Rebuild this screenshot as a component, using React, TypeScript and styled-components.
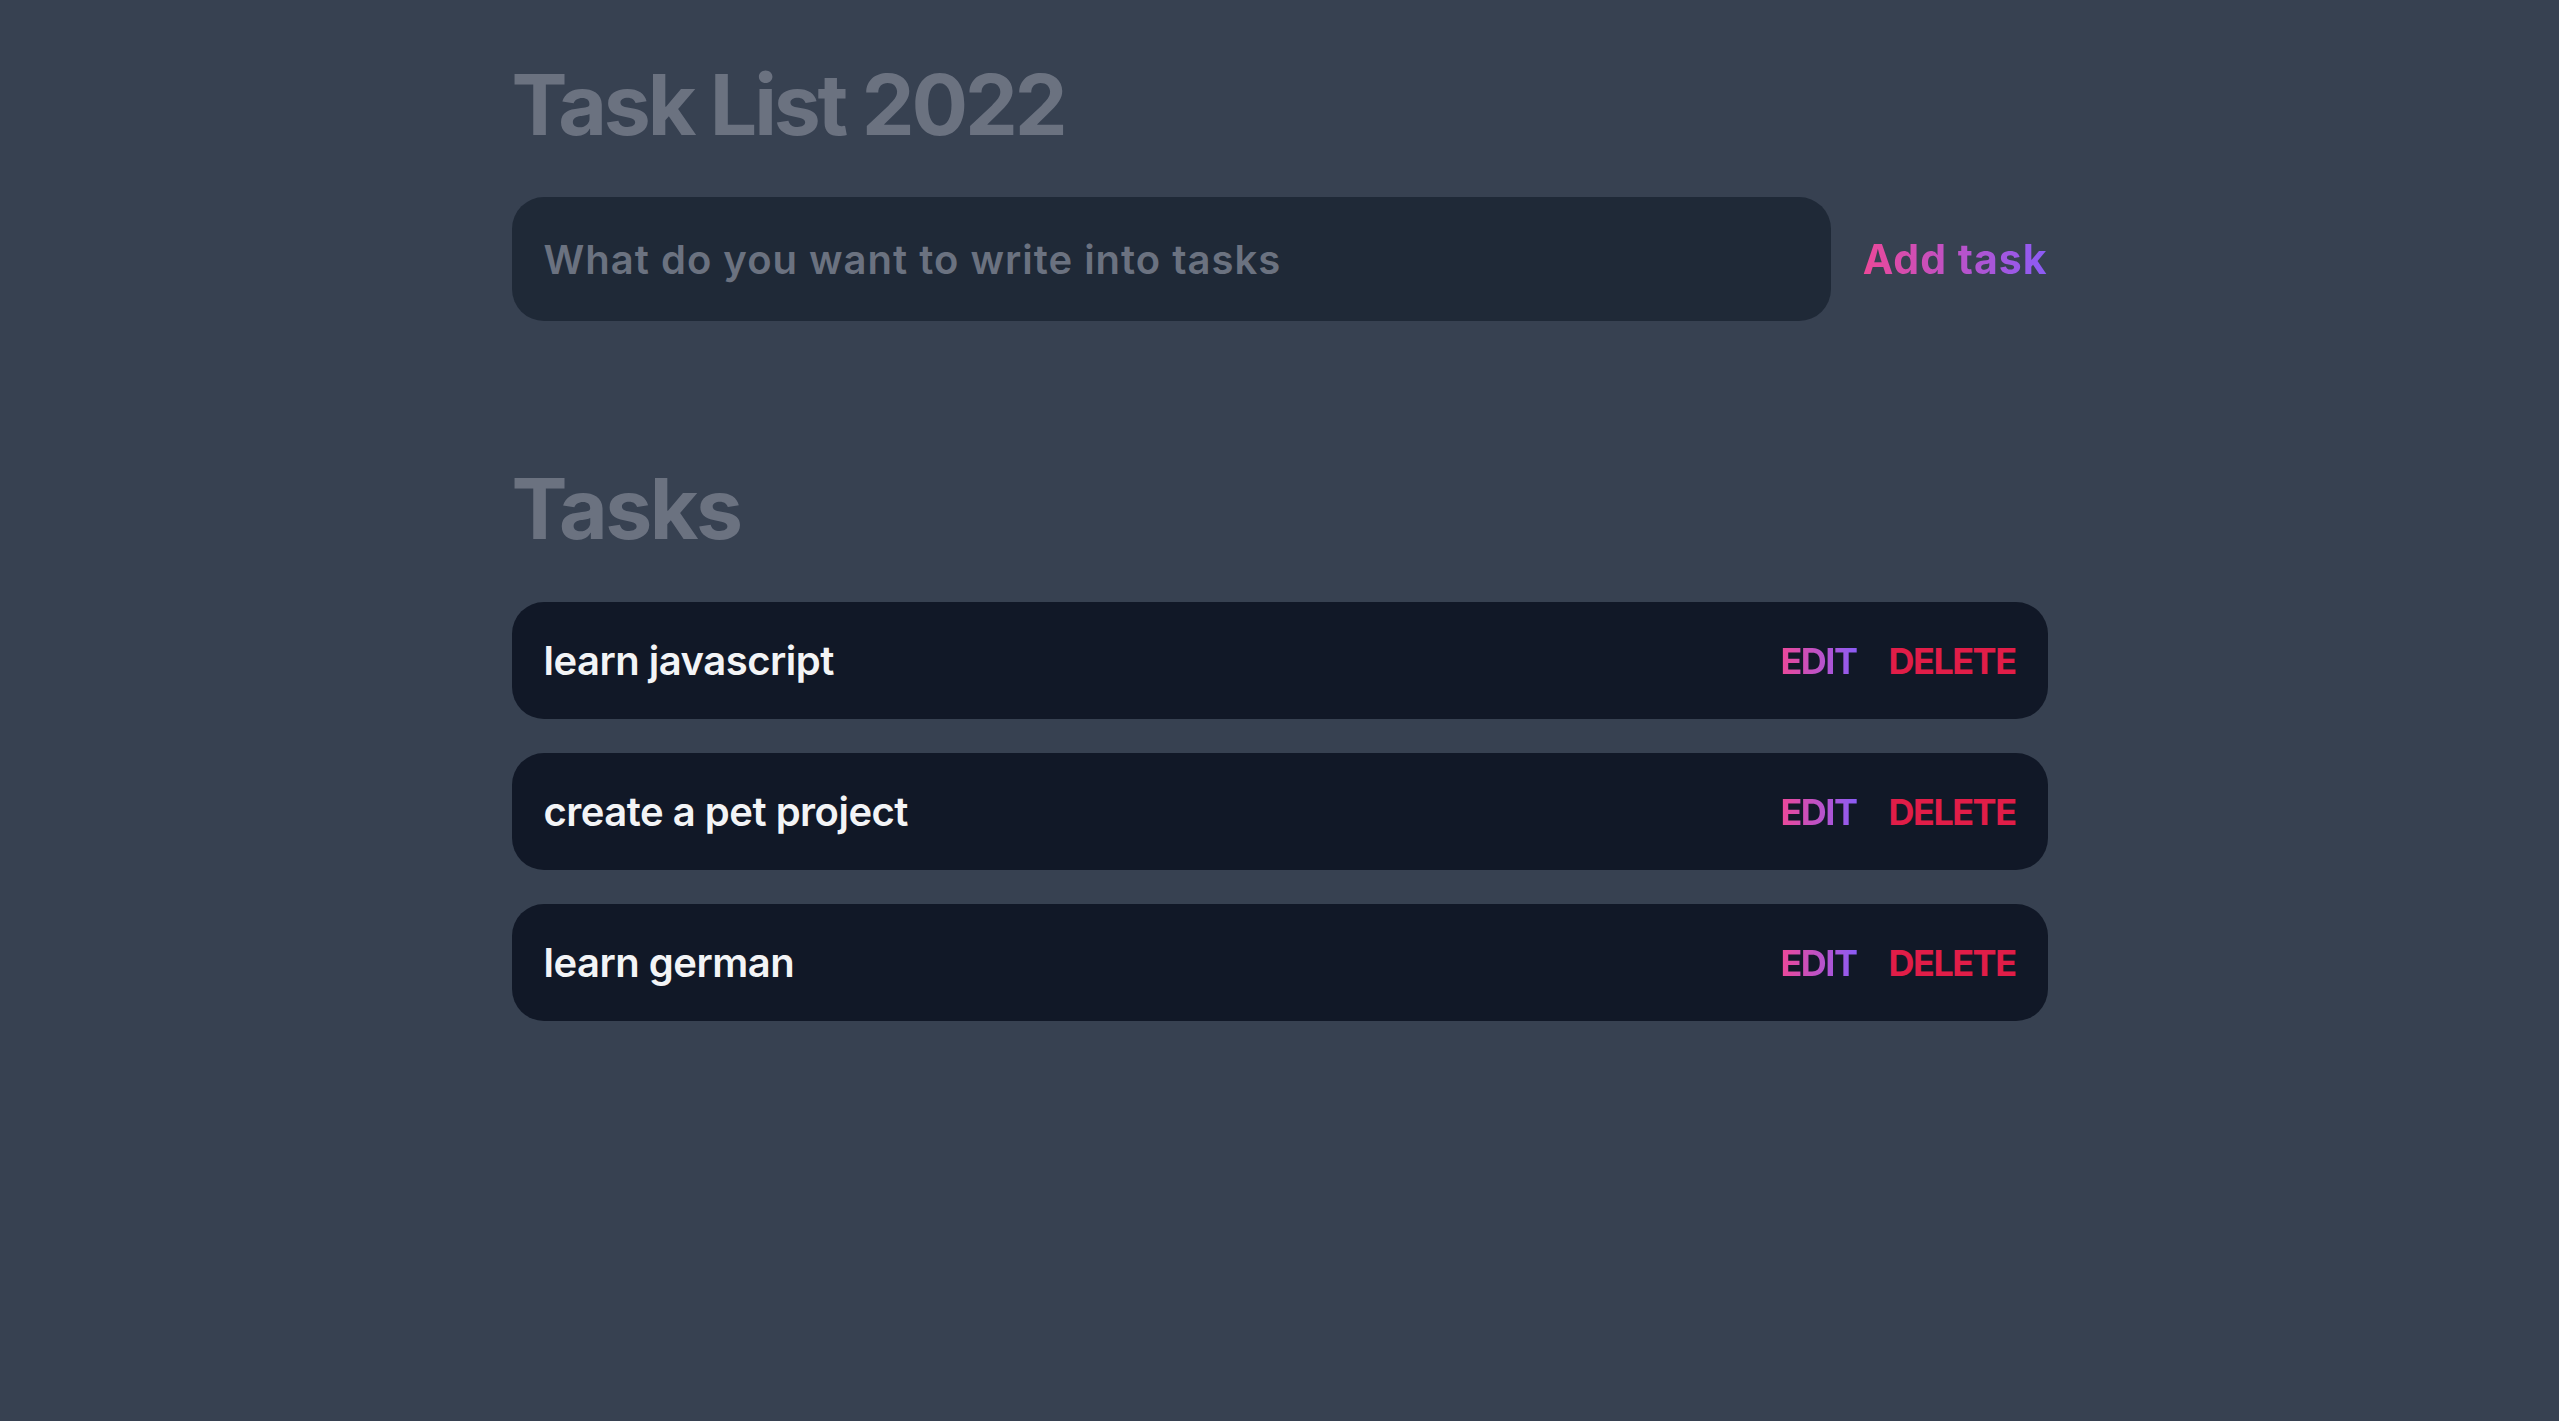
import styled, { createGlobalStyle } from "styled-components";

const GlobalStyle = createGlobalStyle`
  html, body {
    margin: 0;
    padding: 0;
    background: #374151;
    min-height: 100%;
  }
  body {
    font-family: Inter, "Liberation Sans", sans-serif;
  }
  * { box-sizing: border-box; }
`;

const Page = styled.div`
  min-height: 100vh;
  background: #374151;
`;

const Container = styled.main`
  width: 1536px;
  margin: 0 auto;
  padding-top: 57px;
`;

const Title = styled.h1`
  margin: 0;
  font-size: 84px;
  line-height: 96px;
  font-weight: 700;
  letter-spacing: -3.2px;
  color: #6b7280;
`;

const Form = styled.form`
  display: flex;
  align-items: center;
  gap: 32px;
  margin-top: 44px;
`;

const TaskInput = styled.input`
  flex: 1;
  height: 124px;
  padding: 0 32px;
  border: none;
  outline: none;
  border-radius: 32px;
  background: #1f2937;
  color: #f3f4f6;
  font-family: inherit;
  font-size: 40px;
  font-weight: 600;
  letter-spacing: 1px;
  &::placeholder {
    color: #6b7280;
  }
`;

const gradientText = `
  background: linear-gradient(to right, #ec4899, #8b5cf6);
  -webkit-background-clip: text;
  background-clip: text;
  color: transparent;
`;

const AddButton = styled.button`
  border: none;
  padding: 0;
  cursor: pointer;
  font-family: inherit;
  font-size: 41px;
  font-weight: 700;
  letter-spacing: 1px;
  ${gradientText}
`;

const SectionTitle = styled.h2`
  margin: 140px 0 0;
  font-size: 84px;
  line-height: 96px;
  font-weight: 700;
  letter-spacing: -2.5px;
  color: #6b7280;
`;

const TaskList = styled.ul`
  list-style: none;
  margin: 45px 0 0;
  padding: 0;
  display: flex;
  flex-direction: column;
  gap: 34px;
`;

const TaskRow = styled.li`
  display: flex;
  align-items: center;
  justify-content: space-between;
  height: 117px;
  padding: 0 32px;
  border-radius: 32px;
  background: #111827;
`;

const TaskText = styled.span`
  font-size: 40px;
  font-weight: 600;
  letter-spacing: -0.5px;
  color: #f3f4f6;
`;

const Actions = styled.div`
  display: flex;
  align-items: center;
  gap: 32px;
`;

const ActionButton = styled.button<{ $danger?: boolean }>`
  border: none;
  padding: 0;
  cursor: pointer;
  font-family: inherit;
  font-size: 36px;
  font-weight: 700;
  letter-spacing: -1.5px;
  text-transform: uppercase;
  ${(p) => (p.$danger ? "background: none; color: #e11d48;" : gradientText)}
`;

const tasks = ["learn javascript", "create a pet project", "learn german"];

export default function App() {
  return (
    <Page>
      <GlobalStyle />
      <Container>
        <Title>Task List 2022</Title>
        <Form onSubmit={(e) => e.preventDefault()}>
          <TaskInput placeholder="What do you want to write into tasks" />
          <AddButton type="submit">Add task</AddButton>
        </Form>
        <SectionTitle>Tasks</SectionTitle>
        <TaskList>
          {tasks.map((t) => (
            <TaskRow key={t}>
              <TaskText>{t}</TaskText>
              <Actions>
                <ActionButton>Edit</ActionButton>
                <ActionButton $danger>Delete</ActionButton>
              </Actions>
            </TaskRow>
          ))}
        </TaskList>
      </Container>
    </Page>
  );
}
